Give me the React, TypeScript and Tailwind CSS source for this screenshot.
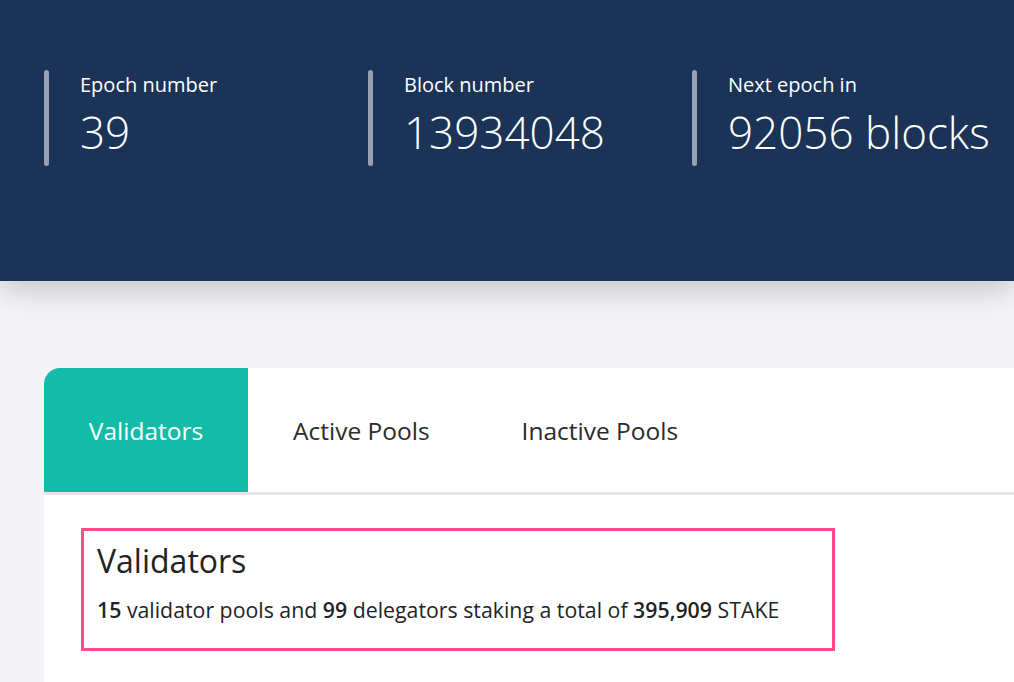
export default function App() {
  const stats = [
    { label: 'Epoch number', value: '39' },
    { label: 'Block number', value: '13934048' },
    { label: 'Next epoch in', value: '92056 blocks' },
  ]
  const tabs = ['Validators', 'Active Pools', 'Inactive Pools']

  return (
    <div className="h-[682px] w-[1014px] overflow-hidden bg-[#f4f4f7] font-['Open_Sans',sans-serif]">
      <header className="relative z-10 h-[281px] bg-[#1b3356] pl-[44px] pt-[70px] shadow-[0_8px_30px_rgba(0,0,0,0.2)]">
        <div className="flex">
          {stats.map((s) => (
            <div key={s.label} className="flex w-[324px] shrink-0 gap-[31px]">
              <div className="h-[96px] w-[5px] rounded-full bg-[#98a1b1]" />
              <div className="pt-[1px] text-white">
                <div className="text-[20px] leading-[28px]">{s.label}</div>
                <div className="mt-[9px] text-[44px] font-light leading-[48px]">{s.value}</div>
              </div>
            </div>
          ))}
        </div>
      </header>

      <main className="pl-[44px] pt-[87px]">
        <div className="rounded-tl-[16px] bg-white">
          <div className="flex h-[127px] border-b-[3px] border-[#e3e5eb] pt-[3px]">
            {tabs.map((t, i) => (
              <div
                key={t}
                className={
                  i === 0
                    ? '-mt-[3px] flex w-[204px] items-center justify-center rounded-tl-[16px] bg-[#13bca7] pt-[3px] text-[24.5px] text-white'
                    : 'flex items-center px-[45px] text-[24.5px] text-[#2b2b2b] last:pl-[47px]'
                }
              >
                {t}
              </div>
            ))}
          </div>
          <div className="px-[37px] pb-[40px] pt-[33px]">
            <div className="w-[754px] border-[3px] border-[#ff4d8a] px-[13px] pb-[24px] pt-[10px] text-[#232323]">
              <h2 className="text-[32px] leading-[40px]">Validators</h2>
              <p className="mt-[15px] text-[21.3px] leading-[28px]">
                <b className="font-semibold">15</b> validator pools and <b className="font-semibold">99</b> delegators staking a total of <b className="font-semibold">395,909</b> STAKE
              </p>
            </div>
          </div>
        </div>
      </main>
    </div>
  )
}
